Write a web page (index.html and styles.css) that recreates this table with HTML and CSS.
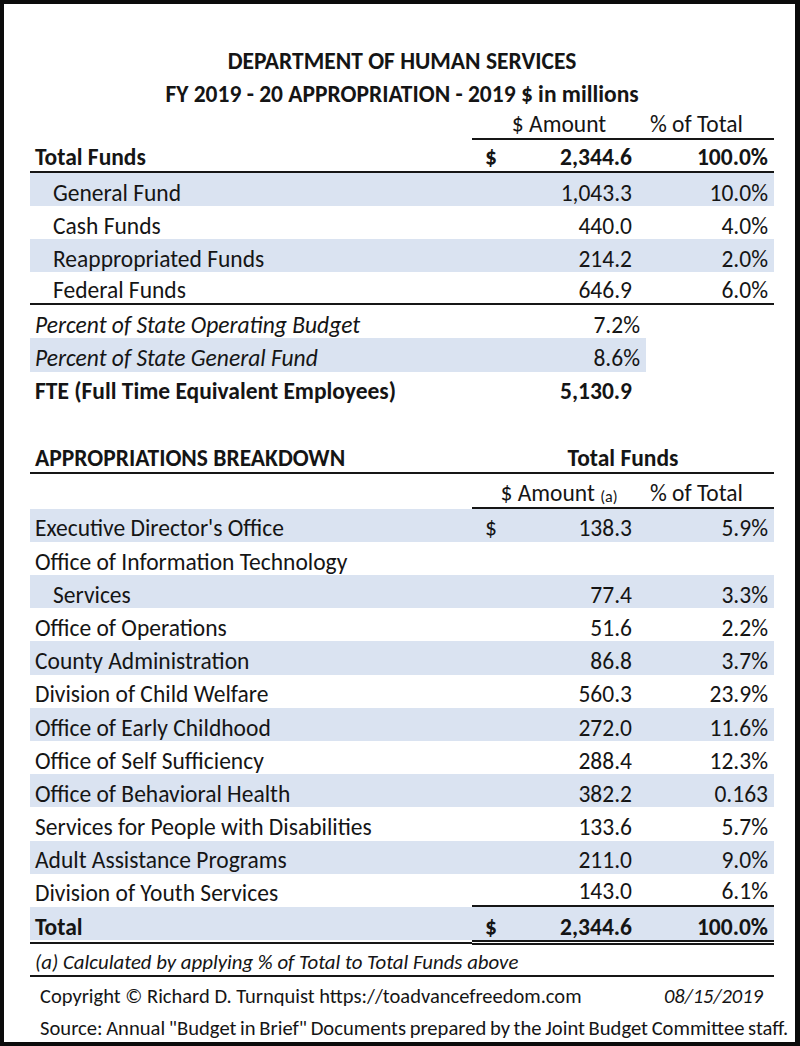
FILE: index.html
```html
<!DOCTYPE html>
<html lang="en">
<head>
<meta charset="utf-8">
<title>Department of Human Services FY 2019-20 Appropriation</title>
<link rel="stylesheet" href="styles.css">
</head>
<body>
<div class="sheet">
  <div class="title">DEPARTMENT OF HUMAN SERVICES</div>
  <div class="title">FY 2019 - 20 APPROPRIATION - 2019 $ in millions</div>

  <div class="row bb-num">
    <div class="cell lbl"></div>
    <div class="cell amt center">$ Amount</div>
    <div class="cell pct left">% of Total</div>
  </div>
  <div class="row bold bb-full">
    <div class="cell lbl">Total Funds</div>
    <div class="cell amt"><span>$</span><span>2,344.6</span></div>
    <div class="cell pct">100.0%</div>
  </div>
  <div class="row band">
    <div class="cell lbl indent">General Fund</div>
    <div class="cell amt end">1,043.3</div>
    <div class="cell pct">10.0%</div>
  </div>
  <div class="row">
    <div class="cell lbl indent">Cash Funds</div>
    <div class="cell amt end">440.0</div>
    <div class="cell pct">4.0%</div>
  </div>
  <div class="row band">
    <div class="cell lbl indent">Reappropriated Funds</div>
    <div class="cell amt end">214.2</div>
    <div class="cell pct">2.0%</div>
  </div>
  <div class="row bb-full">
    <div class="cell lbl indent">Federal Funds</div>
    <div class="cell amt end">646.9</div>
    <div class="cell pct">6.0%</div>
  </div>
  <div class="row">
    <div class="cell lbl ital">Percent of State Operating Budget</div>
    <div class="cell amt end pctfmt">7.2%</div>
    <div class="cell pct"></div>
  </div>
  <div class="row band-part">
    <div class="cell lbl ital">Percent of State General Fund</div>
    <div class="cell amt end pctfmt">8.6%</div>
    <div class="cell pct"></div>
  </div>
  <div class="row bold">
    <div class="cell lbl">FTE (Full Time Equivalent Employees)</div>
    <div class="cell amt end">5,130.9</div>
    <div class="cell pct"></div>
  </div>

  <div class="spacer"></div>

  <div class="row bold bb-full">
    <div class="cell lbl">APPROPRIATIONS BREAKDOWN</div>
    <div class="cell span2 center">Total Funds</div>
  </div>
  <div class="row tall bb-num">
    <div class="cell lbl"></div>
    <div class="cell amt center">$ Amount&nbsp;<small>(a)</small></div>
    <div class="cell pct left">% of Total</div>
  </div>
  <div class="row r2 band">
    <div class="cell lbl">Executive Director's Office</div>
    <div class="cell amt"><span>$</span><span>138.3</span></div>
    <div class="cell pct">5.9%</div>
  </div>
  <div class="row r2">
    <div class="cell lbl">Office of Information Technology</div>
    <div class="cell amt"></div>
    <div class="cell pct"></div>
  </div>
  <div class="row r2 band">
    <div class="cell lbl indent">Services</div>
    <div class="cell amt end">77.4</div>
    <div class="cell pct">3.3%</div>
  </div>
  <div class="row r2">
    <div class="cell lbl">Office of Operations</div>
    <div class="cell amt end">51.6</div>
    <div class="cell pct">2.2%</div>
  </div>
  <div class="row r2 band">
    <div class="cell lbl">County Administration</div>
    <div class="cell amt end">86.8</div>
    <div class="cell pct">3.7%</div>
  </div>
  <div class="row r2">
    <div class="cell lbl">Division of Child Welfare</div>
    <div class="cell amt end">560.3</div>
    <div class="cell pct">23.9%</div>
  </div>
  <div class="row r2 band">
    <div class="cell lbl">Office of Early Childhood</div>
    <div class="cell amt end">272.0</div>
    <div class="cell pct">11.6%</div>
  </div>
  <div class="row r2">
    <div class="cell lbl">Office of Self Sufficiency</div>
    <div class="cell amt end">288.4</div>
    <div class="cell pct">12.3%</div>
  </div>
  <div class="row r2 band">
    <div class="cell lbl">Office of Behavioral Health</div>
    <div class="cell amt end">382.2</div>
    <div class="cell pct">0.163</div>
  </div>
  <div class="row r2">
    <div class="cell lbl">Services for People with Disabilities</div>
    <div class="cell amt end">133.6</div>
    <div class="cell pct">5.7%</div>
  </div>
  <div class="row r2 band">
    <div class="cell lbl">Adult Assistance Programs</div>
    <div class="cell amt end">211.0</div>
    <div class="cell pct">9.0%</div>
  </div>
  <div class="row r2 bb-num">
    <div class="cell lbl">Division of Youth Services</div>
    <div class="cell amt end">143.0</div>
    <div class="cell pct">6.1%</div>
  </div>
  <div class="row r2 band bold">
    <div class="cell lbl">Total</div>
    <div class="cell amt"><span>$</span><span>2,344.6</span></div>
    <div class="cell pct">100.0%</div>
  </div>
  <div class="total-rule">
    <div class="single"></div>
    <div class="double"></div>
  </div>

  <div class="note">(a) Calculated by applying % of Total to Total Funds above</div>
  <div class="copy">
    <span>Copyright © Richard D. Turnquist https://toadvancefreedom.com</span>
    <span class="date">08/15/2019</span>
  </div>
  <div class="source">Source: Annual "Budget in Brief" Documents prepared by the Joint Budget Committee staff.</div>
</div>
</body>
</html>
```
FILE: styles.css
```css
* {
  box-sizing: border-box;
  margin: 0;
  padding: 0;
}

html, body {
  background: #ffffff;
}

body {
  width: 800px;
  height: 1046px;
  overflow: hidden;
}

.sheet {
  --fs: 23.5px;
  --pb: 1px;
  --band: #dae3f1;
  --ink: #151515;
  --rule: #161616;
  width: 800px;
  height: 1046px;
  border: 4px solid #0b0b0b;
  border-right-width: 5px;
  padding: 36.4px 0 0 26px;
  font-family: Carlito, Lato, "Liberation Sans", sans-serif;
  font-size: var(--fs);
  color: var(--ink);
}

.title {
  width: 744px;
  height: 33.2px;
  display: flex;
  align-items: flex-end;
  justify-content: center;
  font-weight: bold;
  line-height: 1;
  padding-bottom: 0;
  white-space: nowrap;
}

.row {
  display: grid;
  grid-template-columns: 442px 174px 128px;
  height: 33.1px;
}

.row.r2 {
  height: 33.2px;
}

.row.tall {
  height: 35px;
}

.cell {
  display: flex;
  align-items: flex-end;
  line-height: 1;
  padding-bottom: var(--pb);
  white-space: nowrap;
}

.lbl {
  padding-left: 5px;
}

.lbl.indent {
  padding-left: 23px;
}

.ital {
  font-style: italic;
}

.bold {
  font-weight: bold;
}

.amt {
  justify-content: space-between;
  padding-left: 13px;
  padding-right: 14px;
}

.amt.end {
  justify-content: flex-end;
}

.amt.pctfmt {
  padding-right: 6px;
}

.amt.center,
.span2.center {
  justify-content: center;
  padding-left: 0;
  padding-right: 0;
}

.span2 {
  grid-column: 2 / span 2;
}

.pct {
  justify-content: flex-end;
  padding-right: 6px;
}

.pct.left {
  justify-content: flex-start;
  padding-left: 4px;
}

small {
  font-size: 16px;
  padding-bottom: 1px;
}

.band .cell,
.band-part .lbl,
.band-part .amt {
  background: var(--band);
}

.bb-full .cell {
  border-bottom: 2px solid var(--rule);
}

.bb-num .amt,
.bb-num .pct {
  border-bottom: 2px solid var(--rule);
}

.spacer {
  height: 36px;
}

.total-rule {
  display: grid;
  grid-template-columns: 442px 302px;
  height: 5px;
}

.total-rule .single {
  border-bottom: 2px solid var(--rule);
  height: 3.5px;
}

.total-rule .double {
  border-top: 2px solid var(--rule);
  border-bottom: 2px solid var(--rule);
}

.note {
  width: 744px;
  height: 32px;
  display: flex;
  align-items: flex-end;
  padding: 0 0 2px 5px;
  font-style: italic;
  line-height: 1;
  font-size: 20.8px;
  word-spacing: 0;
  border-bottom: 2px solid var(--rule);
  white-space: nowrap;
}

.copy {
  width: 744px;
  height: 33px;
  display: flex;
  align-items: flex-end;
  justify-content: space-between;
  padding: 0 11px 4px 10px;
  font-size: 20.5px;
  line-height: 1;
  white-space: nowrap;
}

.copy .date {
  font-style: italic;
}

.source {
  width: 760px;
  height: 28px;
  display: flex;
  align-items: flex-end;
  padding-left: 10px;
  font-size: 20.6px;
  word-spacing: -1px;
  line-height: 1;
  white-space: nowrap;
}
```
